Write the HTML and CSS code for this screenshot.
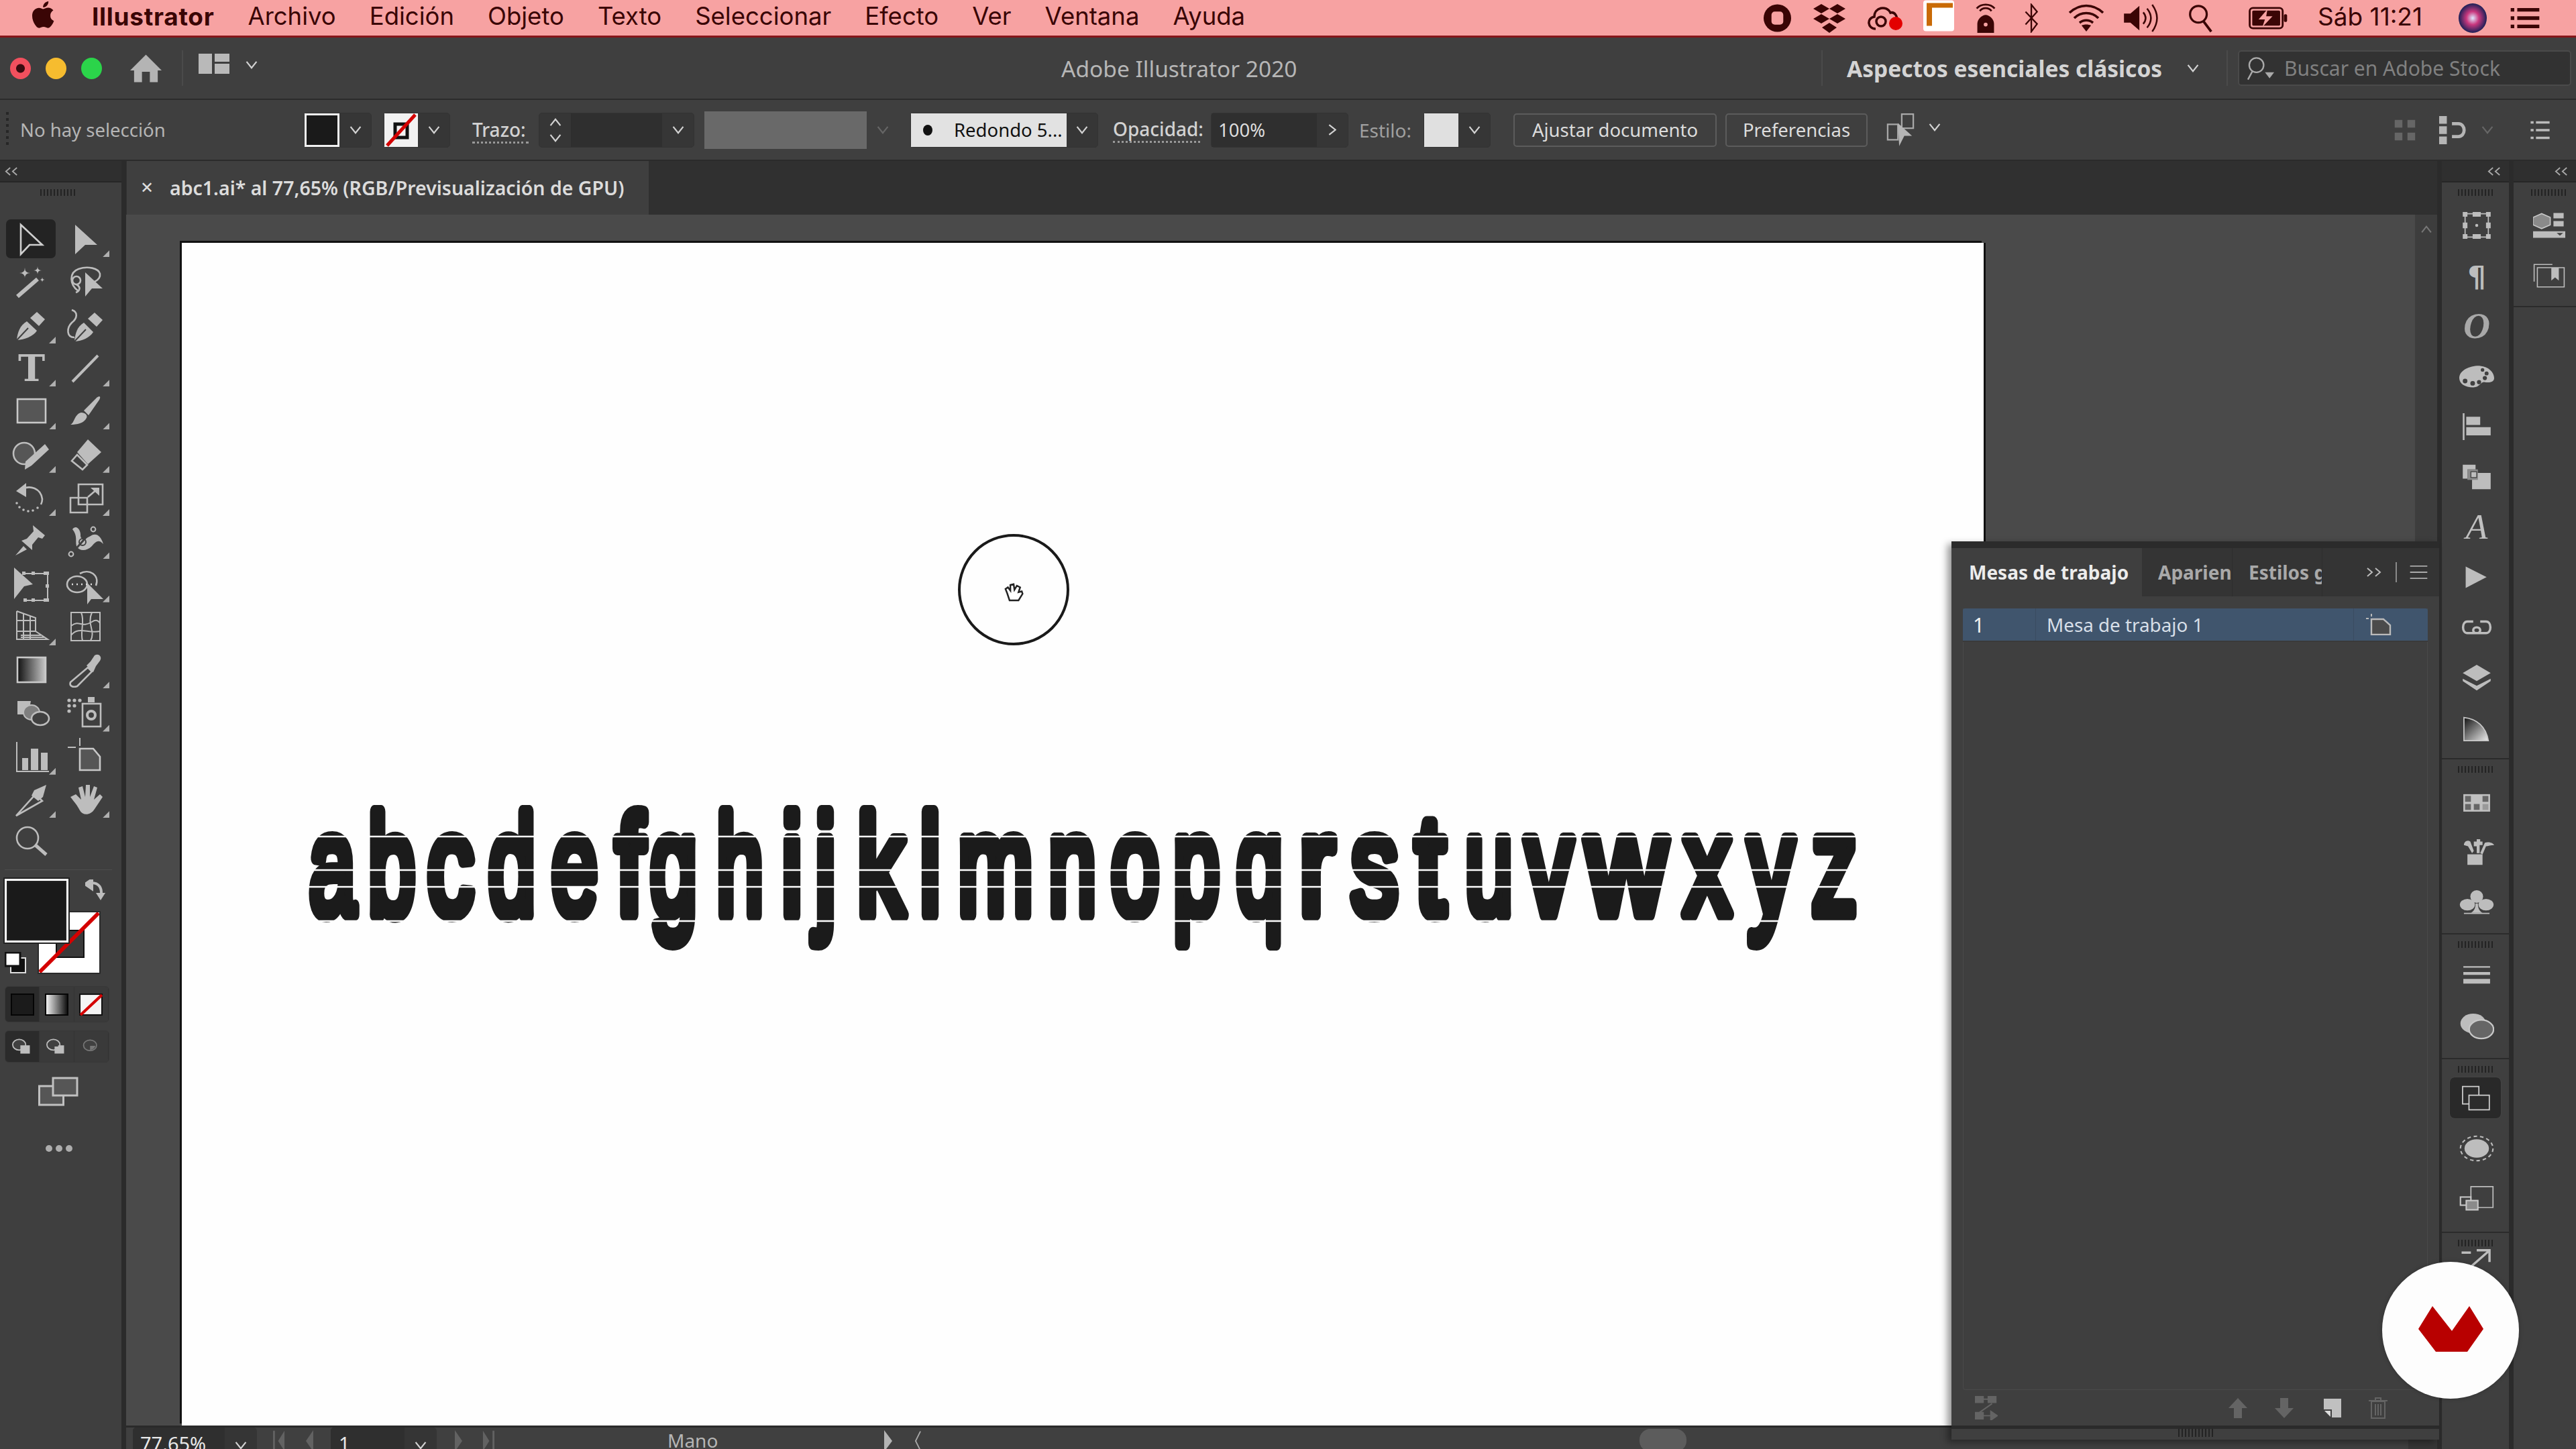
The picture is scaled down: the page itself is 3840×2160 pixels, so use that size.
FILE: index.html
```html
<!DOCTYPE html>
<html lang="es">
<head>
<meta charset="utf-8">
<title>Adobe Illustrator 2020</title>
<link rel="stylesheet" href="styles.css">
</head>
<body>
<svg class="defs" width="0" height="0">
  <symbol id="chev" viewBox="0 0 20 14"><path d="M2 2L10 12L18 2" fill="none" stroke="currentColor" stroke-width="2.4"/></symbol>
  <symbol id="dbl" viewBox="0 0 22 14"><path d="M9 1L2 7L9 13M20 1L13 7L20 13" fill="none" stroke="currentColor" stroke-width="2"/></symbol>
</svg>

<header class="menubar">
  <svg class="apple" viewBox="3 1 18 21" preserveAspectRatio="none"><path d="M17.05 12.04c-.03-2.52 2.06-3.73 2.15-3.79-1.17-1.71-3-1.95-3.65-1.97-1.55-.16-3.03.91-3.82.91-.79 0-2-.89-3.29-.87-1.69.03-3.25.98-4.12 2.5-1.76 3.05-.45 7.56 1.26 10.03.84 1.21 1.83 2.57 3.14 2.52 1.26-.05 1.74-.81 3.26-.81 1.52 0 1.95.81 3.28.79 1.36-.03 2.21-1.23 3.04-2.45.96-1.4 1.35-2.76 1.37-2.83-.03-.01-2.63-1.01-2.62-3.53zM14.55 4.65c.69-.84 1.16-2.01 1.03-3.17-1 .04-2.2.66-2.92 1.5-.64.74-1.2 1.93-1.05 3.07 1.11.09 2.25-.57 2.94-1.4z"/></svg>
  <nav class="menus">
    <span class="menu app">Illustrator</span><span class="menu">Archivo</span><span class="menu">Edición</span><span class="menu">Objeto</span><span class="menu">Texto</span><span class="menu">Seleccionar</span><span class="menu">Efecto</span><span class="menu">Ver</span><span class="menu">Ventana</span><span class="menu">Ayuda</span>
  </nav>
  <div class="status">
    <svg class="st s1" viewBox="0 0 44 44"><circle cx="22" cy="22" r="21"/><rect x="13" y="12" width="18" height="20" rx="5" fill="#f7a2a2"/></svg>
    <svg class="st s2" viewBox="0 0 50 44"><path d="M13 1L25 8L13 15L1 8ZM37 1L49 8L37 15L25 8ZM13 16L25 23L13 30L1 23ZM37 16L49 23L37 30L25 23ZM25 29L36 36L25 44L14 36Z"/></svg>
    <svg class="st s3" viewBox="0 0 54 44"><path d="M14 38C2 38 0 22 12 20C12 6 30 2 36 14C42 12 48 20 44 26" fill="none" stroke="#3a0505" stroke-width="3.5"/><circle cx="22" cy="27" r="7" fill="none" stroke="#3a0505" stroke-width="3.5"/><circle cx="44" cy="30" r="10" fill="#e30000"/></svg>
    <svg class="st s4" viewBox="0 0 46 46"><rect width="46" height="46" rx="4" fill="#fff"/><path d="M5 4H44V11H13V38H5Z" fill="#c96a06"/></svg>
    <svg class="st s5" viewBox="0 0 34 46"><path d="M4 46V32C4 24 12 18 17 18C22 18 30 24 30 32V46Z"/><circle cx="17" cy="33" r="3" fill="#f7a2a2"/><path d="M8 12C12 6 22 6 26 12M3 8C10 0 24 0 31 8" fill="none" stroke="#3a0505" stroke-width="3"/></svg>
    <svg class="st s6" viewBox="0 0 26 46"><path d="M3 13L21 32L12 44V2L21 13L3 33" fill="none" stroke="#3a0505" stroke-width="2.4"/></svg>
    <svg class="st s7" viewBox="0 0 56 44"><path d="M3 14C18 0 38 0 53 14M10 22C20 12 36 12 46 22M18 29C24 24 32 24 38 29" fill="none" stroke="#3a0505" stroke-width="3.6"/><path d="M28 42L21 33C25 31 31 31 35 33Z"/></svg>
    <svg class="st s8" viewBox="0 0 54 46"><path d="M0 16H10L24 4V42L10 30H0Z"/><path d="M30 14C35 20 35 26 30 32M36 8C44 18 44 28 36 38M44 2C54 16 54 30 44 44" fill="none" stroke="#3a0505" stroke-width="2.6"/></svg>
    <svg class="st s9" viewBox="0 0 40 46"><circle cx="17" cy="17" r="13" fill="none" stroke="#3a0505" stroke-width="3.4"/><path d="M25 28L37 44" stroke="#3a0505" stroke-width="4"/></svg>
    <svg class="st s10" viewBox="0 0 62 36"><rect x="2" y="2" width="52" height="32" rx="5" fill="none" stroke="#3a0505" stroke-width="3"/><rect x="6" y="6" width="44" height="24" rx="2"/><rect x="56" y="12" width="5" height="12" rx="2"/><path d="M30 4L16 20H26L22 32L38 15H28Z" fill="#f7a2a2"/></svg>
    <span class="clock">Sáb 11:21</span>
    <svg class="st s11" viewBox="0 0 42 44"><defs><radialGradient id="siri"><stop offset="0" stop-color="#dfe8ff"/><stop offset=".45" stop-color="#c9377e"/><stop offset="1" stop-color="#1b2057"/></radialGradient></defs><ellipse cx="21" cy="22" rx="21" ry="22" fill="url(#siri)"/></svg>
    <svg class="st s12" viewBox="0 0 48 36"><path d="M0 1H6V7H0ZM11 1H48V7H11ZM0 15H6V21H0ZM11 15H48V21H11ZM0 29H6V35H0ZM11 29H48V35H11Z"/></svg>
  </div>
</header>

<section class="titlebar">
  <div class="lights"><i class="light red"></i><i class="light yellow"></i><i class="light green"></i></div>
  <svg class="home" viewBox="0 0 48 42"><path d="M24 0L48 24H42V42H30V26H18V42H6V24H0Z"/></svg>
  <i class="vsep sep-a"></i>
  <svg class="layout" viewBox="0 0 46 30"><path d="M0 0H20V30H0ZM24 0H46V12H24ZM24 15H46V30H24Z"/></svg>
  <svg class="chev chev-layout"><use href="#chev"/></svg>
  <div class="apptitle">Adobe Illustrator 2020</div>
  <i class="vsep"></i>
  <div class="workspace-name">Aspectos esenciales clásicos</div>
  <svg class="chev chev-ws"><use href="#chev"/></svg>
  <i class="vsep sep-c"></i>
  <div class="searchbox">
    <svg class="searchicon" viewBox="0 0 44 36"><circle cx="15" cy="13" r="11" fill="none" stroke="#aaa" stroke-width="2.4"/><path d="M9 22L2 35" stroke="#aaa" stroke-width="2.4"/><path d="M28 24H42L35 33Z" fill="#aaa"/></svg>
    <span>Buscar en Adobe Stock</span>
  </div>
</section>

<section class="controlbar">
  <i class="ctl-grip"></i>
  <div class="nosel">No hay selección</div>
  <div class="combo c-fill"><i class="swatch-dark"></i><svg class="chev"><use href="#chev"/></svg></div>
  <div class="combo c-stroke">
    <svg class="swatch-none" viewBox="0 0 50 50"><rect width="50" height="50" fill="#f2f2f2"/><rect x="16" y="16" width="18" height="20" fill="none" stroke="#111" stroke-width="5"/><path d="M4 48L46 2" stroke="#d40000" stroke-width="5"/></svg>
    <svg class="chev"><use href="#chev"/></svg>
  </div>
  <div class="lbl lbl-trazo">Trazo:</div>
  <div class="combo c-weight">
    <div class="stepper"><svg class="chev flip"><use href="#chev"/></svg><svg class="chev"><use href="#chev"/></svg></div>
    <i class="weightinput"></i>
    <svg class="chev"><use href="#chev"/></svg>
  </div>
  <div class="graybox"></div>
  <svg class="chev dim chev-gray"><use href="#chev"/></svg>
  <div class="combo c-brush"><div class="brushval"><i class="dot"></i><span>Redondo 5...</span></div><svg class="chev"><use href="#chev"/></svg></div>
  <div class="lbl lbl-op">Opacidad:</div>
  <div class="combo c-op"><span class="opinput">100%</span><svg class="chev turn"><use href="#chev"/></svg></div>
  <div class="lbl lbl-est">Estilo:</div>
  <div class="combo c-style"><i class="swatch-light"></i><svg class="chev"><use href="#chev"/></svg></div>
  <div class="btn btn-fit">Ajustar documento</div>
  <div class="btn btn-pref">Preferencias</div>
  <svg class="isolate" viewBox="0 0 44 54"><path d="M2 18H18V42H2ZM24 2H42V24H24Z" fill="none" stroke="#a8a8a8" stroke-width="2.4"/><path d="M18 16L40 36H28L20 52Z" fill="#b5b5b5"/></svg>
  <svg class="chev chev-iso"><use href="#chev"/></svg>
  <div class="ctl-right">
    <svg class="ri-grid" viewBox="0 0 40 44"><path d="M4 6H16V18H4ZM24 6H36V18H24ZM4 26H16V38H4ZM24 26H36V38H24Z" fill="#666"/></svg>
    <svg class="ri-snap" viewBox="0 0 44 44"><path d="M0 0H12V12H0ZM0 16H12V28H0ZM0 32H12V44H0Z" fill="#b5b5b5"/><path d="M20 12H30C42 12 42 32 30 32H20" fill="none" stroke="#b5b5b5" stroke-width="5"/></svg>
    <svg class="chev dim chev-snap"><use href="#chev"/></svg>
    <svg class="ri-menu" viewBox="0 0 32 34"><path d="M0 2H5V6H0ZM9 2H32V6H9ZM0 15H5V19H0ZM9 15H32V19H9ZM0 28H5V32H0ZM9 28H32V32H9Z" fill="#bbb"/></svg>
  </div>
</section>

<main class="workspace">
  <aside class="toolbar">
    <div class="collapse"><svg class="dbl"><use href="#dbl"/></svg></div>
    <i class="grip tgrip"></i>
    <div class="tools">
      <div class="tool active"><svg viewBox="0 0 60 56"><path d="M15 7L47 37H28L15 51Z" fill="#242424" stroke="#cfcfcf" stroke-width="2.6"/></svg></div>
      <div class="tool fly"><svg viewBox="0 0 60 56"><path d="M15 7L48 37H30L15 51Z"/></svg></div>
      <div class="tool"><svg viewBox="0 0 60 56"><path d="M9 50L39 24" class="o w6"/><path d="M20 7Q20 15 28 15Q20 15 20 23Q20 15 12 15Q20 15 20 7ZM39 5Q39 11 45 11Q39 11 39 17Q39 11 33 11Q39 11 39 5ZM46 21Q46 25 50 25Q46 25 46 29Q46 25 42 25Q46 25 46 21Z"/></svg></div>
      <div class="tool"><svg viewBox="0 0 60 56"><path class="o" d="M20 42C6 32 6 14 20 9C34 4 50 8 52 16C53 22 48 26 44 28"/><circle class="o" cx="17" cy="26" r="6"/><path class="o" d="M17 32C24 36 22 42 16 44"/><path d="M30 14L56 38H40L30 50Z"/></svg></div>
      <div class="tool fly"><svg viewBox="0 0 60 56"><path d="M8 50C9 38 13 28 23 22L38 36C32 45 20 49 8 50Z"/><path class="dk" d="M8 50L25 32"/><path d="M28 17L38 8L50 19L41 29Z"/></svg></div>
      <div class="tool"><svg viewBox="0 0 60 56"><path class="o" d="M10 5C20 8 18 18 10 24C2 32 2 46 14 46"/><path d="M14 52C15 40 18 30 28 24L42 38C36 47 26 51 14 52Z"/><path class="dk" d="M14 52L31 34"/><path d="M34 18L44 9L56 20L47 30Z"/></svg></div>
      <div class="tool fly"><svg viewBox="0 0 60 56"><text class="t-tool" x="30" y="47">T</text></svg></div>
      <div class="tool fly"><svg viewBox="0 0 60 56"><path class="o w4" d="M11 48L49 9"/></svg></div>
      <div class="tool fly"><svg viewBox="0 0 60 56"><rect x="9" y="10" width="42" height="35" fill="#565656" stroke="#c8c8c8" stroke-width="2.6"/></svg></div>
      <div class="tool fly"><svg viewBox="0 0 60 56"><path d="M8 48C14 46 14 32 24 30C30 30 34 34 32 38C28 46 18 48 8 48Z"/><path d="M28 27L46 9C51 4 54 6 51 11L35 34Z"/></svg></div>
      <div class="tool fly"><svg viewBox="0 0 60 56"><circle cx="19" cy="26" r="16" fill="#565656" stroke="#bdbdbd" stroke-width="2.6"/><path d="M20 50L21 38L50 12L56 20L30 44Z"/></svg></div>
      <div class="tool fly"><svg viewBox="0 0 60 56"><path d="M34 5L54 24L34 42L18 24Z"/><path class="o" d="M18 28L33 43L26 50L10 37Z"/></svg></div>
      <div class="tool fly"><svg viewBox="0 0 60 56"><path class="o" d="M14 16C28 8 44 14 46 30C46 34 45 36 44 38"/><path d="M7 18L22 6V27Z"/><g><circle cx="39" cy="43" r="1.8"/><circle cx="32" cy="47" r="1.8"/><circle cx="25" cy="48" r="1.8"/><circle cx="18" cy="46" r="1.8"/><circle cx="12" cy="42" r="1.8"/><circle cx="8" cy="36" r="1.8"/></g></svg></div>
      <div class="tool fly"><svg viewBox="0 0 60 56"><path class="o" d="M20 8H56V38H20ZM8 28H33V50H8Z"/><path class="o" d="M34 27L48 15"/><path d="M38 13H51V25Z"/></svg></div>
      <div class="tool"><svg viewBox="0 0 60 56"><path d="M32 5L50 20L46 25L40 23L31 34L31 42L15 28L23 25L33 14ZM18 36L6 50L23 41Z"/></svg></div>
      <div class="tool fly"><svg viewBox="0 0 60 56"><path d="M11 11C17 3 24 13 23 21C24 28 31 25 38 21C45 16 53 19 57 33C51 26 46 28 40 36C32 44 21 44 17 36C15 28 19 21 11 11Z"/><path class="dk2" d="M10 47L41 12"/><circle cx="9" cy="48" r="3.4" fill="#404040" stroke="#bdbdbd" stroke-width="2"/><circle cx="42" cy="11" r="3.4" fill="#404040" stroke="#bdbdbd" stroke-width="2"/><circle cx="26" cy="30" r="5" fill="none" stroke="#404040" stroke-width="2"/></svg></div>
      <div class="tool"><svg viewBox="0 0 60 56"><path class="o thin" d="M18 12H54V52H18"/><path d="M16 9H21V14H16ZM30 9H35V14H30ZM48 9H56V14H48ZM51 28H56V33H51ZM48 49H56V54H48ZM30 49H35V54H30ZM18 49H23V54H18Z"/><path d="M4 3L32 28L19 31L4 50Z"/></svg></div>
      <div class="tool fly"><svg viewBox="0 0 60 56"><ellipse class="o" cx="18" cy="28" rx="15" ry="12"/><path class="o" d="M22 12C36 4 52 14 46 30"/><path class="dash" d="M10 28H40"/><path d="M33 26L57 50H39L33 58Z"/></svg></div>
      <div class="tool fly"><svg viewBox="0 0 60 56"><path class="o thin" d="M8 4L36 14V34M8 4V46H54L36 34H8M8 18H36M18 8V46M28 11V46M44 40H14M50 43H14"/></svg></div>
      <div class="tool"><svg viewBox="0 0 60 56"><path class="o thin" d="M9 6H52V48H9ZM9 26C22 16 24 30 40 20C46 16 50 18 52 22M9 40C20 26 34 38 52 34M24 6C30 20 22 34 26 48M40 6C32 24 46 34 38 48"/></svg></div>
      <div class="tool"><svg viewBox="0 0 60 56"><defs><linearGradient id="tg"><stop offset="0" stop-color="#111"/><stop offset="1" stop-color="#c8c8c8"/></linearGradient></defs><rect x="9" y="9" width="42" height="37" fill="url(#tg)" stroke="#c8c8c8" stroke-width="2.6"/></svg></div>
      <div class="tool fly"><svg viewBox="0 0 60 56"><path class="o" d="M8 46L34 24L40 30L18 52C12 54 6 52 8 46Z"/><path d="M32 21L38 15L44 6C50 2 56 8 52 14L46 22L42 31Z"/></svg></div>
      <div class="tool"><svg viewBox="0 0 60 56"><path d="M9 10H29L26 26H20V30H9Z"/><ellipse cx="30" cy="27" rx="12" ry="11" fill="#7f7f7f" stroke="#bdbdbd" stroke-width="2"/><ellipse cx="43" cy="36" rx="13" ry="10" fill="#404040" stroke="#bdbdbd" stroke-width="2.6"/></svg></div>
      <div class="tool fly"><svg viewBox="0 0 60 56"><g><circle cx="6" cy="9" r="2.6"/><circle cx="14" cy="9" r="2.6"/><circle cx="22" cy="9" r="2.6"/><circle cx="6" cy="17" r="2.6"/><circle cx="14" cy="17" r="2.6"/><circle cx="6" cy="25" r="2.6"/></g><path d="M34 4H44V12H34Z"/><rect class="o" x="26" y="14" width="27" height="34"/><circle class="o w4" cx="39" cy="31" r="6"/></svg></div>
      <div class="tool fly"><svg viewBox="0 0 60 56"><path class="o thin" d="M8 6V50H56"/><path d="M16 30H25V48H16ZM29 16H40V48H29ZM44 22H54V48H44Z" /></svg></div>
      <div class="tool"><svg viewBox="0 0 60 56"><path class="o thin" d="M4 14H16M22 0V12"/><path d="M22 16H42L52 28V48H22Z" fill="#565656" stroke="#c8c8c8" stroke-width="2.6"/></svg></div>
      <div class="tool fly"><svg viewBox="0 0 60 56"><path class="o" d="M7 52L36 20L46 30Z"/><path d="M34 14L52 6L47 24L40 30L30 22Z"/></svg></div>
      <div class="tool fly"><svg viewBox="0 0 60 56"><path d="M8 24L16 20L24 28L20 10L26 8L30 24L31 6L37 6L37 24L43 8L48 10L43 28L52 20L56 24L44 42C38 52 26 52 22 44C18 36 14 32 8 24Z"/></svg></div>
      <div class="tool"><svg viewBox="0 0 60 56"><circle class="o" cx="24" cy="21" r="16"/><path class="o w5" d="M36 32L52 46"/></svg></div>
      <div class="tool blank"></div>
    </div>
    <i class="hr"></i>
    <div class="well">
      <div class="well-stroke"><i class="well-hole"></i><svg class="well-x" viewBox="0 0 94 94" preserveAspectRatio="none"><path d="M1 93L93 1" stroke="#d40000" stroke-width="6"/></svg></div>
      <div class="well-fill"></div>
      <svg class="well-swap" viewBox="0 0 30 32"><path d="M10 0V14L0 7ZM9 5C22 5 24 14 24 20" fill="none" stroke="#bdbdbd" stroke-width="4"/><path d="M10 0V14L0 7ZM16 20H30L23 31Z" fill="#bdbdbd"/></svg>
      <svg class="well-def" viewBox="0 0 32 32"><rect x="9" y="9" width="22" height="22" fill="#111" stroke="#ddd" stroke-width="2"/><rect x="1" y="1" width="22" height="20" fill="#fff" stroke="#111" stroke-width="3"/></svg>
    </div>
    <div class="seg seg-mode">
      <div class="segcell on"><i class="m-solid"></i></div>
      <div class="segcell"><i class="m-grad"></i></div>
      <div class="segcell"><svg class="m-none" viewBox="0 0 34 32" preserveAspectRatio="none"><rect x="1" y="1" width="32" height="30" fill="#f4f4f4" stroke="#111" stroke-width="2"/><path d="M2 31L33 2" stroke="#d40000" stroke-width="4"/></svg></div>
    </div>
    <div class="seg seg-draw">
      <div class="segcell on"><svg viewBox="0 0 34 28"><ellipse cx="12" cy="11" rx="11" ry="9" fill="#404040" stroke="#bdbdbd" stroke-width="2"/><rect x="14" y="12" width="16" height="14" fill="#bdbdbd"/></svg></div>
      <div class="segcell"><svg viewBox="0 0 34 28"><ellipse cx="12" cy="11" rx="11" ry="9" fill="#404040" stroke="#bdbdbd" stroke-width="2"/><path d="M14 14H20V12H30V26H14Z" fill="#bdbdbd"/></svg></div>
      <div class="segcell"><svg viewBox="0 0 34 28" class="faint"><ellipse cx="15" cy="12" rx="11" ry="9" fill="#404040" stroke="#777" stroke-width="2"/><path d="M15 13H24A10 8 0 0 1 15 20Z" fill="#777"/></svg></div>
    </div>
    <svg class="screenmode" viewBox="0 0 60 44"><rect x="1.5" y="14" width="36" height="28" fill="#565656" stroke="#c0c0c0" stroke-width="3"/><rect x="22" y="2" width="36" height="26" fill="#565656" stroke="#c0c0c0" stroke-width="3"/></svg>
    <div class="more"><i></i><i></i><i></i></div>
  </aside>

  <div class="center">
    <div class="tabrow">
      <div class="doctab"><span class="tabx">✕</span><span class="tabname">abc1.ai* al 77,65% (RGB/Previsualización de GPU)</span></div>
    </div>
    <div class="canvasrow">
      <div class="pasteboard">
        <div class="artboard">
          <svg class="art" viewBox="271 362 2686 1763">
            <text class="artword" y="1363"><tspan x="461" textLength="69" lengthAdjust="spacingAndGlyphs">a</tspan><tspan x="549" textLength="70" lengthAdjust="spacingAndGlyphs">b</tspan><tspan x="637" textLength="69" lengthAdjust="spacingAndGlyphs">c</tspan><tspan x="728" textLength="70" lengthAdjust="spacingAndGlyphs">d</tspan><tspan x="822" textLength="69" lengthAdjust="spacingAndGlyphs">e</tspan><tspan x="918" textLength="42" lengthAdjust="spacingAndGlyphs">f</tspan><tspan x="969" textLength="70" lengthAdjust="spacingAndGlyphs">g</tspan><tspan x="1068" textLength="70" lengthAdjust="spacingAndGlyphs">h</tspan><tspan x="1165" textLength="31" lengthAdjust="spacingAndGlyphs">i</tspan><tspan x="1215" textLength="31" lengthAdjust="spacingAndGlyphs">j</tspan><tspan x="1278" textLength="70" lengthAdjust="spacingAndGlyphs">k</tspan><tspan x="1371" textLength="31" lengthAdjust="spacingAndGlyphs">l</tspan><tspan x="1428" textLength="112" lengthAdjust="spacingAndGlyphs">m</tspan><tspan x="1563" textLength="71" lengthAdjust="spacingAndGlyphs">n</tspan><tspan x="1656" textLength="72" lengthAdjust="spacingAndGlyphs">o</tspan><tspan x="1749" textLength="69" lengthAdjust="spacingAndGlyphs">p</tspan><tspan x="1843" textLength="69" lengthAdjust="spacingAndGlyphs">q</tspan><tspan x="1937" textLength="52" lengthAdjust="spacingAndGlyphs">r</tspan><tspan x="2014" textLength="70" lengthAdjust="spacingAndGlyphs">s</tspan><tspan x="2110" textLength="44" lengthAdjust="spacingAndGlyphs">t</tspan><tspan x="2184" textLength="71" lengthAdjust="spacingAndGlyphs">u</tspan><tspan x="2274" textLength="70" lengthAdjust="spacingAndGlyphs">v</tspan><tspan x="2365" textLength="119" lengthAdjust="spacingAndGlyphs">w</tspan><tspan x="2510" textLength="70" lengthAdjust="spacingAndGlyphs">x</tspan><tspan x="2606" textLength="68" lengthAdjust="spacingAndGlyphs">y</tspan><tspan x="2701" textLength="67" lengthAdjust="spacingAndGlyphs">z</tspan></text>
            <path class="pinch" d="M440 1247H2790M440 1297H2790M440 1322H2790M440 1373H2790"/>
          </svg>
          <div class="brush"><svg class="hand" viewBox="0 0 28 28"><path d="M6 14L4 9L7 7L10 11L10 4L14 3L15 10L18 5L22 7L20 13L24 12L25 15L20 23L9 23Z" fill="#fff" stroke="#222" stroke-width="2"/></svg></div>
        </div>
      </div>
      <div class="vscroll"><svg class="chev flip"><use href="#chev"/></svg></div>
    </div>
    <footer class="statusbar">
      <div class="sb-combo sb-zoom"><span>77.65%</span><svg class="chev"><use href="#chev"/></svg></div>
      <svg class="nav nav1" viewBox="0 0 20 36"><path d="M0 2H3V34H0ZM18 2V34L8 18Z"/></svg>
      <svg class="nav nav2" viewBox="0 0 12 36"><path d="M12 2V34L1 18Z"/></svg>
      <div class="sb-combo sb-page"><span>1</span><svg class="chev"><use href="#chev"/></svg></div>
      <svg class="nav nav3" viewBox="0 0 12 36"><path d="M0 2V34L11 18Z"/></svg>
      <svg class="nav nav4" viewBox="0 0 20 36"><path d="M17 2H20V34H17ZM2 2V34L12 18Z"/></svg>
      <div class="sb-tool">Mano</div>
      <svg class="nav nav5" viewBox="0 0 12 36"><path d="M0 2V34L12 18Z"/></svg>
      <svg class="nav nav6" viewBox="0 0 10 36"><path d="M9 2L1 18L9 34" fill="none" stroke="#aaa" stroke-width="2"/></svg>
      <div class="thumb"></div>
      <div class="sb-corner"></div>
    </footer>
  </div>

  <aside class="dock dock1">
    <div class="collapse right"><svg class="dbl"><use href="#dbl"/></svg></div>
    <div class="dgroup g1">
      <i class="grip"></i>
      <div class="dicon"><svg viewBox="0 0 60 50"><path class="o thin" d="M10 5H50V45H10Z" /><path d="M6 2H14V10H6ZM23 2H37V10H23ZM46 2H54V10H46ZM6 20H14V30H6ZM46 20H54V30H46ZM6 40H14V48H6ZM23 40H37V48H23ZM46 40H54V48H46Z"/><circle cx="30" cy="25" r="2.6"/></svg></div>
      <div class="dicon"><svg viewBox="0 0 60 50" class="ovf"><text class="t-para" x="30" y="44">¶</text></svg></div>
      <div class="dicon"><svg viewBox="0 0 60 50" class="ovf"><text class="t-o" x="30" y="46">O</text></svg></div>
      <div class="dicon"><svg viewBox="0 0 60 50"><path d="M0 28C0 14 20 6 36 7C50 8 60 18 60 28C60 36 50 36 44 35C36 34 36 44 24 44C10 44 0 38 0 28Z"/><g fill="#404040"><circle cx="10" cy="33" r="4"/><circle cx="23" cy="37" r="4"/><circle cx="34" cy="35" r="3.6"/><circle cx="44" cy="28" r="3.6"/><circle cx="47" cy="20" r="3.4"/><circle cx="40" cy="14" r="3"/></g></svg></div>
      <div class="dicon"><svg viewBox="0 0 60 50"><path d="M6 2H9V48H6ZM12 8H36V22H12ZM12 26H54V40H12Z"/></svg></div>
      <div class="dicon"><svg viewBox="0 0 60 50"><path d="M6 4H28V12H14V28H6ZM22 18H54V46H22Z"/><path d="M14 12H32V30H14Z" fill="#8a8a8a"/><path d="M20 16H30V26H20Z" fill="#bdbdbd" stroke="#404040" stroke-width="1.5"/></svg></div>
      <div class="dicon"><svg viewBox="0 0 60 50" class="ovf"><text class="t-a" x="30" y="45">A</text></svg></div>
      <div class="dicon"><svg viewBox="0 0 60 50"><path d="M11 6L47 24L11 43Z"/></svg></div>
      <div class="dicon"><svg viewBox="0 0 60 50"><path class="o w4" d="M24 14H14C4 14 4 34 14 34H30C38 34 38 24 30 24M36 14H46C56 14 56 34 46 34H30C22 34 22 24 30 24"/></svg></div>
      <div class="dicon"><svg viewBox="0 0 60 50"><path d="M30 2L54 16L30 30L6 16ZM6 26L30 38L54 26L54 30L30 46L6 30Z"/></svg></div>
      <div class="dicon"><svg viewBox="0 0 60 50"><defs><linearGradient id="gg" x1="0" y1="0" x2="1" y2="1"><stop offset="0" stop-color="#111"/><stop offset="1" stop-color="#eee"/></linearGradient></defs><path d="M8 6C30 8 46 22 50 46H8Z" fill="url(#gg)" stroke="#c8c8c8" stroke-width="2"/></svg></div>
    </div>
    <div class="dgroup g2">
      <i class="grip"></i>
      <div class="dicon"><svg viewBox="0 0 60 50"><rect x="7" y="11" width="46" height="30" fill="#c0c0c0"/><path d="M10 14H20V24H10ZM40 14H50V24H40ZM10 28H20V38H10ZM25 28H35V38H25Z" fill="#666"/><path d="M40 28H50V38H40Z" fill="#999"/></svg></div>
      <div class="dicon"><svg viewBox="0 0 60 50"><path d="M14 28H40V46H14ZM22 26L15 14L8 12C8 6 14 2 19 6L25 22ZM30 26V14H25V6H30V2H36V6H40V12H35V26ZM36 26L44 8C50 6 58 8 60 12C54 12 50 14 46 14L40 28Z"/></svg></div>
      <div class="dicon"><svg viewBox="0 0 60 50"><circle cx="30" cy="14" r="11"/><ellipse cx="14" cy="28" rx="13" ry="10"/><ellipse cx="46" cy="28" rx="13" ry="10"/><path d="M28 26H32C32 36 36 40 40 42H20C24 40 28 36 28 26Z"/><rect x="8" y="42" width="44" height="2"/></svg></div>
    </div>
    <div class="dgroup g3">
      <i class="grip"></i>
      <div class="dicon"><svg viewBox="0 0 60 50"><path d="M7 8H53V10.500H7ZM7 18H53V23H7ZM7 30H53V38H7Z"/></svg></div>
      <div class="dicon"><svg viewBox="0 0 60 50"><ellipse cx="24" cy="20" rx="22" ry="17"/><ellipse cx="38" cy="30" rx="21" ry="16" fill="#666" stroke="#c8c8c8" stroke-width="2.6"/></svg></div>
    </div>
    <div class="dgroup g4">
      <i class="grip"></i>
      <div class="dicon act"><svg viewBox="0 0 60 50"><path d="M8 5H36V35H8Z" fill="#2c2c2c" stroke="#d0d0d0" stroke-width="2"/><path d="M19 20H54V45H19Z" fill="#2c2c2c" stroke="#d0d0d0" stroke-width="2"/></svg></div>
      <div class="dicon"><svg viewBox="0 0 60 50"><ellipse cx="30" cy="25" rx="21" ry="16"/><ellipse class="dash2" cx="30" cy="25" rx="28" ry="21"/></svg></div>
      <div class="dicon"><svg viewBox="0 0 60 50"><path class="o thin" d="M20 22V4H58V40H28"/><rect x="2" y="22" width="18" height="14" fill="#404040" stroke="#c8c8c8" stroke-width="2.4"/><rect x="12" y="28" width="20" height="16" fill="#8a8a8a" stroke="#c8c8c8" stroke-width="2.4"/></svg></div>
    </div>
    <div class="dgroup g5">
      <i class="grip"></i>
      <div class="dicon"><svg viewBox="0 0 60 50"><path class="o w4" d="M4 8H20M18 34L50 6M30 4H52V24"/></svg></div>
    </div>
  </aside>

  <aside class="dock dock2">
    <div class="collapse right"><svg class="dbl"><use href="#dbl"/></svg></div>
    <div class="dgroup d2g1">
      <i class="grip"></i>
      <div class="dicon"><svg viewBox="0 0 60 50"><path d="M0 10L16 3L32 10V24L16 31L0 24Z" fill="#8a8a8a" stroke="#c8c8c8" stroke-width="2"/><path d="M38 2H57V12H38ZM38 17H57V27H38ZM0 36H60V48H0Z"/><path d="M44 39H56L50 44Z" fill="#404040"/></svg></div>
      <div class="dicon"><svg viewBox="0 0 60 50"><path class="o thin" d="M2 36V4H36M8 10H58V46H8Z" /><path d="M34 10H48V34L41 28L34 34Z"/></svg></div>
    </div>
  </aside>

  <section class="panel">
    <div class="panel-head"></div>
    <div class="panel-tabs">
      <div class="ptab current">Mesas de trabajo</div>
      <div class="ptab t2"><span>Apariencia</span></div>
      <div class="ptab t3"><span>Estilos gráficos</span></div>
      <div class="ptab-tools">
        <svg class="ptab-dbl" viewBox="0 0 24 16"><path d="M2 2L9 8L2 14M14 2L21 8L14 14" fill="none" stroke="#bbb" stroke-width="2"/></svg>
        <i class="ptab-sep"></i>
        <svg class="ptab-menu" viewBox="0 0 28 24"><path d="M0 2H28M0 12H28M0 22H28" stroke="#aaa" stroke-width="2"/></svg>
      </div>
    </div>
    <div class="abframe">
      <div class="abrow">
        <span class="abnum">1</span>
        <span class="abname">Mesa de trabajo 1</span>
        <span class="abicon"><svg viewBox="0 0 38 32"><path d="M0 7H4M8 0V4" stroke="#bbb" stroke-width="2"/><path d="M8 8H26L36 17V31H8Z" fill="#4b4b4b" stroke="#bbb" stroke-width="2.4"/></svg></span>
      </div>
    </div>
    <div class="panel-foot">
      <svg class="pf pf-link" viewBox="0 0 34 38"><path d="M0 0H12V10H0ZM20 0H32V10H20ZM0 26H12V36H0ZM12 5H20M26 12L6 26M12 31H24M24 24L34 31L24 38Z" fill="#646464" stroke="#646464" stroke-width="2"/></svg>
      <svg class="pf pf-up" viewBox="0 0 28 30"><path d="M14 0L28 15H20V30H8V15H0Z" fill="#646464"/></svg>
      <svg class="pf pf-down" viewBox="0 0 28 30"><path d="M14 30L28 15H20V0H8V15H0Z" fill="#646464"/></svg>
      <svg class="pf pf-new" viewBox="0 0 26 28"><path d="M0 0H26V28H12V16H0Z" fill="#c0c0c0"/><path d="M1 18H10V27Z" fill="#ddd"/></svg>
      <svg class="pf pf-trash" viewBox="0 0 28 32"><path d="M0 5H28M10 5V1H18V5M4 6H24V31H4ZM10 10V27M14 10V27M18 10V27" fill="none" stroke="#646464" stroke-width="2"/></svg>
    </div>
    <div class="panel-end"><i class="grip hgrip"></i></div>
  </section>

  <div class="badge">
    <svg class="logo" viewBox="0 0 97 68"><path d="M0 34L21 0L50 37L76 0L97 34L73 68H26Z"/></svg>
  </div>
</main>
</body>
</html>
```

FILE: styles.css
```css
* { box-sizing: border-box; }
html, body { margin: 0; padding: 0; }
body { width: 3840px; height: 2160px; overflow: hidden; background: #3f3f3f; color: #c8c8c8; font-family: "Noto Sans", "Liberation Sans", sans-serif; position: relative; }
i { display: block; font-style: normal; }
svg { display: block; flex: none; }
.defs { position: absolute; }
.chev { width: 20px; height: 13px; color: #d2d2d2; }
.chev.flip { transform: rotate(180deg); }
.chev.turn { transform: rotate(-90deg); }
.chev.dim { color: #666; }
.dbl { width: 20px; height: 13px; color: #aaa; }

/* menu bar */
.menubar { height: 56px; background: #f7a2a2; border-bottom: 3px solid #86161a; display: flex; align-items: center; color: #3a0505; }
.apple { width: 36px; height: 42px; margin: -10px 0 0 47px; fill: #3a0505; }
.menus { display: flex; margin-left: 54px; font-family: Inter, "Liberation Sans", sans-serif; font-size: 36.500px; margin-top: -4px; }
.menu { margin-right: 50px; white-space: nowrap; }
.menu.app { font-weight: 700; font-size: 37px; letter-spacing: .7px; }
.status { margin-left: auto; display: flex; align-items: center; height: 53px; padding-right: 52px; }
.st { fill: #3a0505; height: 44px; }
.s1 { width: 43px; }
.s2 { width: 50px; margin-left: 31px; }
.s3 { width: 54px; margin-left: 30px; }
.s4 { width: 46px; height: 47px; margin-left: 31px; margin-top: -6px; }
.s5 { width: 34px; margin-left: 30px; }
.s6 { width: 26px; margin-left: 39px; }
.s7 { width: 56px; margin-left: 40px; }
.s8 { width: 54px; margin-left: 27px; }
.s9 { width: 40px; margin-left: 41px; }
.s10 { width: 62px; height: 34px; margin-left: 50px; }
.clock { font-family: Inter, "Liberation Sans", sans-serif; font-size: 37px; margin-left: 43px; margin-top: -4px; width: 162px; white-space: nowrap; }
.s11 { width: 42px; margin-left: 48px; }
.s12 { width: 48px; height: 32px; margin-left: 33px; }

/* title bar */
.titlebar { height: 93px; background: #3f3f3f; border-bottom: 2px solid #2b2b2b; display: flex; align-items: center; position: relative; }
.lights { display: flex; margin-left: 15px; gap: 22px; }
.light { width: 31px; height: 32px; border-radius: 50%; }
.red { background: radial-gradient(circle, #3a0c10 0 6px, #f2505e 7px); }
.yellow { background: #f6bc2f; }
.green { background: #2bd44a; }
.home { width: 47px; height: 42px; margin-left: 42px; fill: #b4b4b4; }
.vsep { width: 2px; height: 53px; background: #4a4a4a; margin-left: auto; }
.sep-a { margin-left: 30px; }
.layout { width: 46px; height: 30px; margin: -14px 0 0 23px; fill: #b9b9b9; }
.chev-layout { margin: -10px 0 0 23px; }
.apptitle { position: absolute; left: 1582px; width: 356px; font-size: 33.500px; color: #b6b6b6; white-space: nowrap; }
.workspace-name { margin-left: 36px; width: 476px; font-size: 33.500px; font-weight: 700; color: #d4d4d4; white-space: nowrap; }
.chev-ws { margin-left: 30px; }
.sep-c { margin-left: 40px; }
.searchbox { width: 497px; height: 53px; margin-left: 15px; margin-right: 7px; background: #323232; border: 2px solid #4a4a4a; border-radius: 5px; display: flex; align-items: center; padding-left: 11px; font-size: 30px; color: #808080; }
.searchicon { width: 43px; height: 36px; margin-right: 13px; }
.searchbox span { white-space: nowrap; }

/* control bar */
.controlbar { height: 91px; background: #3f3f3f; border-bottom: 2px solid #2b2b2b; display: flex; align-items: center; font-size: 27.500px; position: relative; }
.ctl-grip { position: absolute; left: 9px; top: 18px; width: 4px; height: 52px; background: repeating-linear-gradient(#262626 0 4px, transparent 4px 9px); }
.nosel { width: 453px; padding-left: 30px; color: #b5b5b5; white-space: nowrap; }
.combo { height: 52px; display: flex; align-items: center; background: #363636; border: 1px solid #333; border-radius: 5px; }
.combo > .chev { margin: 0 auto; }
.c-fill { width: 101px; }
.swatch-dark { width: 52px; height: 50px; background: #1a1a1a; border: 3px solid #f2f2f2; flex: none; }
.c-stroke { width: 99px; margin-left: 18px; }
.swatch-none { width: 50px; height: 50px; }
.lbl { color: #d2d2d2; white-space: nowrap; font-size: 28px; }
.lbl-trazo { width: 84px; margin-left: 33px; border-bottom: 3px dotted #999; line-height: 36px; margin-top: 2px; font-weight: 500; }
.c-weight { width: 232px; margin-left: 15px; }
.stepper { width: 48px; height: 50px; flex: none; display: flex; flex-direction: column; justify-content: space-between; align-items: center; padding: 7px 0; border-right: 1px solid #2e2e2e; }
.weightinput { width: 135px; height: 50px; background: #2f2f2f; flex: none; }
.graybox { width: 242px; height: 56px; margin-left: 15px; background: #696969; }
.chev-gray { margin-left: 14px; margin-right: 14px; }
.c-brush { width: 280px; margin-left: 17px; }
.brushval { width: 232px; height: 50px; background: #e2e2e2; color: #111; display: flex; align-items: center; flex: none; padding-left: 18px; white-space: nowrap; }
.dot { width: 14px; height: 16px; background: #111; border-radius: 50%; margin-right: 32px; flex: none; }
.lbl-op { width: 130px; margin-left: 22px; border-bottom: 3px dotted #999; line-height: 36px; font-weight: 500; }
.c-op { width: 205px; margin-left: 16px; }
.opinput { width: 157px; height: 50px; line-height: 50px; background: #2f2f2f; padding-left: 10px; flex: none; color: #ddd; }
.lbl-est { width: 77px; margin-left: 16px; color: #a0a0a0; }
.c-style { width: 100px; margin-left: 19px; }
.swatch-light { width: 51px; height: 50px; background: #e0e0e0; flex: none; }
.btn { height: 50px; line-height: 46px; text-align: center; border: 2px solid #5c5c5c; border-radius: 5px; color: #dcdcdc; white-space: nowrap; }
.btn-fit { width: 303px; margin-left: 34px; }
.btn-pref { width: 212px; margin-left: 13px; }
.isolate { width: 42px; height: 52px; margin-left: 28px; }
.chev-iso { margin: -8px 0 0 20px; }
.ctl-right { margin-left: auto; display: flex; align-items: center; padding-right: 38px; }
.ri-grid { width: 38px; height: 42px; }
.ri-snap { width: 42px; height: 44px; margin-left: 32px; }
.chev-snap { margin-left: 20px; }
.ri-menu { width: 31px; height: 30px; margin-left: 53px; }

/* workspace */
.workspace { height: 1920px; background: #2b2b2b; display: flex; gap: 7px; position: relative; }
.toolbar { width: 181px; background: #3f3f3f; flex: none; display: flex; flex-direction: column; }
.collapse { height: 32px; background: #2f2f2f; border-bottom: 2px solid #262626; display: flex; align-items: center; padding-left: 7px; flex: none; }
.collapse.right { justify-content: flex-end; padding: 0 12px 0 0; }
.grip { width: 52px; height: 10px; background: repeating-linear-gradient(90deg, #232323 0 2px, transparent 2px 5px); margin: 10px auto 6px; flex: none; }
.tgrip { margin: 10px 0 0 60px; }
.tools { display: grid; grid-template-columns: 80px 80px; grid-auto-rows: 64.300px; margin: 32px 0 0 7px; }
.tool { display: flex; align-items: center; justify-content: center; position: relative; }
.tool svg { width: 60px; height: 56px; fill: #bdbdbd; overflow: visible; }
.tool.active { background: #232323; border-radius: 7px; margin: 3px 4px 3px 2px; }
.tool.fly::after { content: ""; position: absolute; right: 4px; bottom: 5px; width: 10px; height: 10px; background: #b0b0b0; clip-path: polygon(100% 0, 100% 100%, 0 100%); }
.o { fill: none; stroke: #bdbdbd; stroke-width: 2.6; }
.o.w4 { stroke-width: 4; }
.o.w5 { stroke-width: 5; }
.o.w6 { stroke-width: 6; }
.o.thin { stroke-width: 2; }
.dk { stroke: #404040; stroke-width: 2; fill: none; }
.dk2 { stroke: #404040; stroke-width: 3; fill: none; }
.dash { fill: none; stroke: #ddd; stroke-width: 2.4; stroke-dasharray: 2 5; }
.dash2 { fill: none; stroke: #bdbdbd; stroke-width: 2.4; stroke-dasharray: 6 5; }
.t-tool { font-family: "DejaVu Serif", serif; font-weight: 700; font-size: 54px; text-anchor: middle; fill: #bdbdbd; }
.ovf { overflow: visible; }
.t-para { font-family: "DejaVu Sans", sans-serif; font-size: 50px; font-weight: 700; text-anchor: middle; }
.t-o { font-family: "Liberation Serif", serif; font-weight: 700; font-style: italic; font-size: 64px; text-anchor: middle; fill: #a8a8a8; }
.t-a { font-family: "Liberation Serif", serif; font-style: italic; font-size: 62px; text-anchor: middle; fill: #c0c0c0; }
.hr { height: 1px; background: #4c4c4c; margin: 8px 14px 0 7px; flex: none; }
.well { position: relative; height: 155px; flex: none; }
.well-stroke { position: absolute; left: 56px; top: 61px; width: 94px; height: 94px; background: #fff; border: 2px solid #2b2b2b; }
.well-hole { position: absolute; left: 25px; top: 26px; width: 43px; height: 42px; background: #3a3a3a; border: 2px solid #111; }
.well-x { position: absolute; left: 0; top: 0; width: 90px; height: 90px; }
.well-fill { position: absolute; left: 7px; top: 13px; width: 95px; height: 95px; background: #1a1a1a; border: 3px solid #fff; outline: 2px solid #222; box-shadow: inset 0 0 0 2px #222; }
.well-swap { position: absolute; left: 127px; top: 14px; width: 30px; height: 32px; }
.well-def { position: absolute; left: 7px; top: 122px; width: 32px; height: 32px; }
.seg { display: grid; grid-template-columns: repeat(3, 1fr); width: 156px; margin-left: 7px; background: #3a3a3a; border: 1px solid #383838; border-radius: 6px; overflow: hidden; flex: none; }
.seg-mode { height: 54px; margin-top: 18px; }
.seg-draw { height: 48px; margin-top: 12px; }
.segcell { display: flex; align-items: center; justify-content: center; border-right: 1px solid #333; }
.segcell.on { background: #2b2b2b; }
.m-solid { width: 35px; height: 33px; background: #1b1b1b; border: 2px solid #050505; }
.m-grad { width: 35px; height: 33px; background: linear-gradient(90deg, #f2f2f2, #111); border: 2px solid #050505; }
.m-none { width: 35px; height: 33px; }
.seg-draw svg { width: 30px; height: 26px; }
.screenmode { width: 60px; height: 44px; margin: 21px 0 0 57px; flex: none; }
.more { display: flex; gap: 5px; margin: 58px 0 0 68px; }
.more i { width: 10px; height: 10px; border-radius: 50%; background: #adadad; }

/* center */
.center { width: 3445px; flex: none; display: flex; flex-direction: column; margin-right: 0; }
.tabrow { height: 80px; display: flex; background: #303030; flex: none; }
.doctab { width: 778px; background: #3f3f3f; display: flex; align-items: center; padding: 0 0 0 20px; white-space: nowrap; margin-left: 1px; }
.tabx { font-size: 24px; width: 44px; color: #ddd; font-family: "DejaVu Sans", sans-serif; }
.tabname { font-size: 28.500px; font-weight: 600; color: #dcdcdc; }
.canvasrow { height: 1805px; display: flex; flex: none; }
.pasteboard { width: 3412px; background: #4a4a4a; padding: 42px 0 0 83px; flex: none; overflow: hidden; }
.artboard { width: 2686px; height: 1763px; background: #fefefe; box-shadow: -3px -3px 0 #111, 3px 0 0 #111; position: relative; }
.art { position: absolute; left: 0; top: 0; width: 2686px; height: 1763px; }
.artword { font-family: "Liberation Sans", sans-serif; font-weight: 400; font-size: 212px; fill: #1b1b1b; stroke: #1b1b1b; stroke-width: 20; stroke-linejoin: round; stroke-linecap: round; }
.pinch { fill: none; stroke: #fefefe; stroke-width: 2.5; }
.brush { position: absolute; left: 1157px; top: 434px; width: 166px; height: 166px; border: 4px solid #1a1a1a; border-radius: 50%; display: flex; align-items: center; justify-content: center; }
.hand { width: 34px; height: 34px; margin-top: 10px; }
.vscroll { width: 33px; background: #3d3d3d; padding-top: 16px; display: flex; justify-content: center; align-items: flex-start; flex: none; }
.vscroll .chev { color: #777; width: 24px; height: 12px; }

/* status bar */
.statusbar { height: 35px; background: #404040; border-top: 3px solid #2a2a2a; display: flex; font-size: 29px; overflow: hidden; position: relative; color: #bbb; }
.sb-combo { height: 40px; background: #353535; border-radius: 5px; display: flex; flex: none; color: #e8e8e8; padding-top: 4px; overflow: hidden; }
.sb-zoom { width: 185px; margin-left: 10px; }
.sb-zoom span { width: 137px; padding-left: 11px; background: #2f2f2f; margin-top: -4px; padding-top: 4px; height: 40px; }
.sb-page { width: 158px; margin-left: 110px; position: absolute; left: 195px; }
.sb-page span { width: 110px; padding-left: 12px; background: #2f2f2f; margin-top: -4px; padding-top: 4px; height: 40px; }
.sb-combo .chev { margin: 16px auto 0; }
.nav { fill: #626262; height: 36px; position: absolute; top: 2px; }
.nav1 { left: 219px; width: 19px; }
.nav2 { left: 267px; width: 12px; }
.nav3 { left: 490px; width: 12px; }
.nav4 { left: 530px; width: 19px; }
.nav5 { left: 1130px; width: 12px; fill: #b4b4b4; }
.nav6 { left: 1176px; width: 9px; }
.sb-tool { position: absolute; left: 807px; top: 0; font-size: 28px; color: #b5b5b5; }
.thumb { position: absolute; left: 2256px; top: 2px; width: 70px; height: 34px; background: #5c5c5c; border-radius: 16px; }
.sb-corner { position: absolute; right: 0; top: 0; width: 43px; height: 35px; background: #363636; }

/* docks */
.dock { background: #3f3f3f; flex: none; display: flex; flex-direction: column; }
.dock1 { width: 100px; }
.dock2 { width: 93px; }
.dgroup { border-bottom: 2px solid #2b2b2b; flex: none; }
.g1 { height: 860px; }
.g2 { height: 261px; }
.g3 { height: 186px; }
.g4 { height: 259px; }
.g5 { border: 0; flex: 1; }
.d2g1 { height: 186px; }
.dicon { height: 75px; display: flex; align-items: center; justify-content: center; position: relative; padding-left: 4px; }
.dicon svg { width: 52px; height: 44px; fill: #bdbdbd; }
.g3 .grip, .g4 .grip { margin-bottom: 4px; }
.g5 .grip { margin-bottom: -14px; }
.d2g1 .dicon { padding-left: 12px; }
.d2g1 .dicon svg { width: 48px; height: 42px; }
.d2g1 .grip { margin-left: 26px; }
.dicon.act { height: 61px; margin: 7px 12px; padding-left: 0; background: #292929; border-radius: 7px; outline: 1px solid #444; }

/* artboards panel */
.panel { position: absolute; left: 2909px; top: 567px; width: 727px; height: 1339px; background: #3f3f3f; box-shadow: -6px 4px 10px rgba(0,0,0,.4); display: flex; flex-direction: column; }
.panel-head { height: 10px; background: #2b2b2b; flex: none; }
.panel-tabs { height: 72px; display: flex; background: #343434; flex: none; font-size: 28px; font-weight: 700; }
.ptab { display: flex; align-items: center; flex: none; white-space: nowrap; overflow: hidden; color: #a9a9a9; border-right: 1px solid #2d2d2d; }
.ptab.current { width: 284px; background: #3f3f3f; color: #ececec; padding-left: 26px; border: 0; }
.t2 { width: 135px; padding-left: 24px; }
.t3 { width: 134px; padding-left: 24px; }
.ptab-tools { display: flex; align-items: center; flex: 1; padding-left: 65px; }
.ptab-dbl { width: 24px; height: 16px; }
.ptab-sep { width: 2px; height: 30px; background: #8a8a8a; margin-left: 20px; }
.ptab-menu { width: 27px; height: 22px; margin-left: 19px; }
.abframe { height: 1165px; margin: 18px 17px 0 17px; border: 1px solid #4a4a4a; border-top: 0; border-radius: 0 0 4px 4px; flex: none; }
.abrow { height: 50px; margin: 0 -1px; background: #40556d; display: flex; align-items: center; font-size: 27.800px; color: #d7dfe8; border-radius: 3px 3px 0 0; border-bottom: 2px solid #3a3a3a; }
.abnum { width: 109px; height: 100%; padding-left: 15px; border-right: 1px solid #3a4c60; color: #f0f0f0; display: flex; align-items: center; font-size: 30px; }
.abname { width: 474px; height: 100%; padding-left: 16px; display: flex; align-items: center; border-right: 1px solid #3a4c60; white-space: nowrap; }
.abicon { flex: 1; padding-left: 18px; }
.abicon svg { width: 38px; height: 32px; }
.panel-foot { height: 53px; display: flex; align-items: center; flex: none; position: relative; }
.pf { height: 36px; position: absolute; top: 9px; }
.pf-link { left: 35px; width: 34px; }
.pf-up { left: 413px; width: 28px; height: 30px; top: 12px; }
.pf-down { left: 482px; width: 28px; height: 30px; top: 12px; }
.pf-new { left: 555px; width: 26px; height: 28px; top: 13px; }
.pf-trash { left: 622px; width: 28px; height: 32px; top: 11px; }
.panel-end { height: 21px; border-top: 5px solid #2a2a2a; background: #3f3f3f; flex: none; }
.hgrip { margin: 0 auto; width: 52px; height: 12px; }

/* logo badge */
.badge { position: absolute; left: 3551px; top: 1641px; width: 204px; height: 204px; border-radius: 50%; background: #fdfdfd; box-shadow: 0 0 6px rgba(0,0,0,.25); display: flex; align-items: center; justify-content: center; }
.logo { width: 97px; height: 68px; fill: #b80000; margin-bottom: 4px; }
```
